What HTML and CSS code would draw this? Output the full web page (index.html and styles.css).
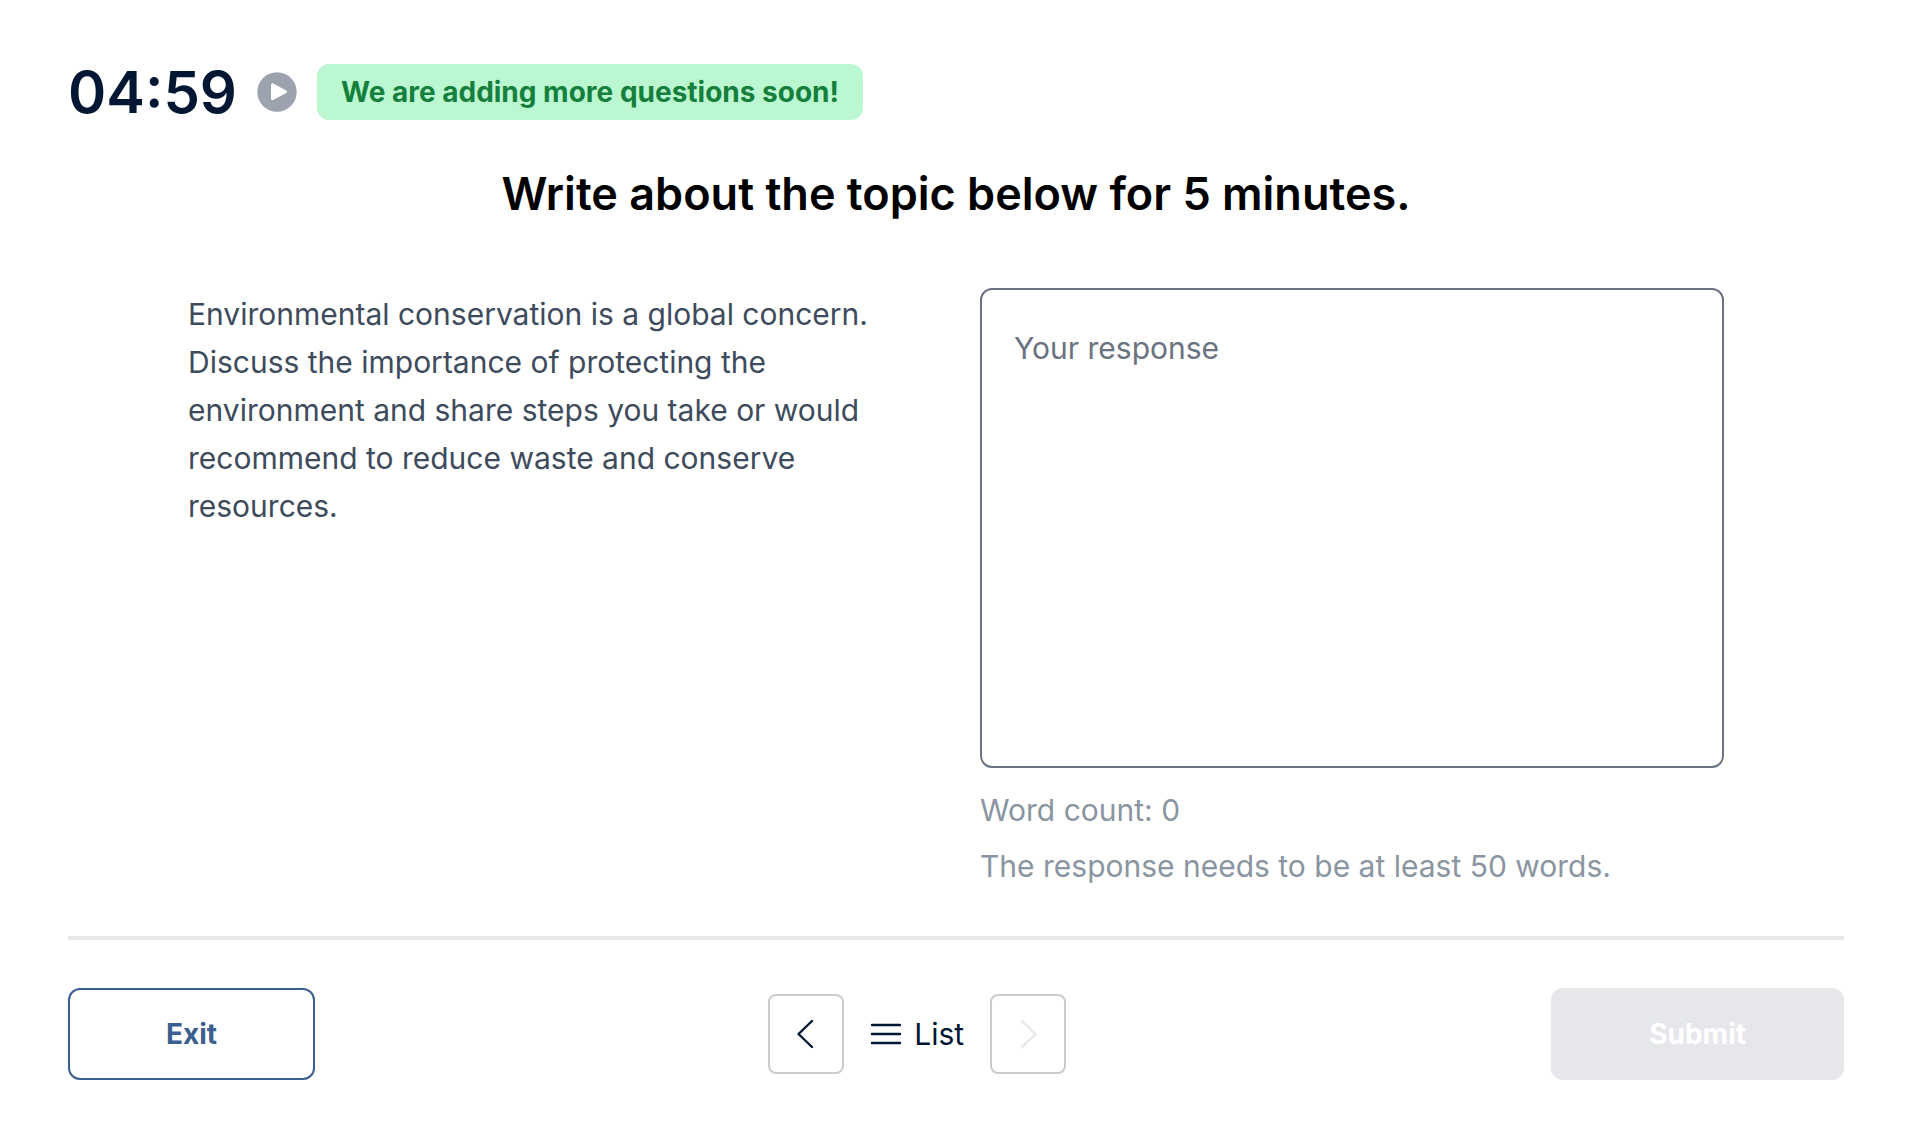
FILE: index.html
```html
<!DOCTYPE html>
<html lang="en">
<head>
    <meta charset="UTF-8">
    <meta name="viewport" content="width=device-width, initial-scale=1.0">
    <title>Writing practice</title>
    <link rel="stylesheet" href="styles.css">
</head>
<body>
    <header class="top-bar">
        <span class="timer" id="timer">04:59</span>
        <button class="play-btn" type="button" aria-label="Start timer">
            <svg viewBox="0 0 40 40">
                <circle cx="20" cy="20" r="19.7" fill="#9ca3af"/>
                <path d="M15.500 12.800 L28.500 19.700 L15.500 26.600 Z" fill="#fff" stroke="#fff" stroke-width="3" stroke-linejoin="round"/>
            </svg>
        </button>
        <div class="notice">We are adding more questions soon!</div>
    </header>

    <main>
        <h1>Write about the topic below for 5 minutes.</h1>

        <div class="task">
            <p class="prompt">Environmental conservation is a global concern. Discuss the importance of protecting the environment and share steps you take or would recommend to reduce waste and conserve resources.</p>

            <div class="answer">
                <textarea id="response" aria-label="Your response" placeholder="Your response"></textarea>
                <p class="hint">Word count: <span id="count">0</span></p>
                <p class="hint">The response needs to be at least 50 words.</p>
            </div>
        </div>
    </main>

    <footer class="bottom-bar">
        <button class="btn exit-btn" type="button">Exit</button>

        <nav class="pager">
            <button class="arrow-btn" type="button" aria-label="Previous">
                <svg viewBox="0 0 32 32"><path d="M22 3 L8.500 16 L22 29"/></svg>
            </button>
            <button class="list-btn" type="button">
                <svg viewBox="0 0 32 32"><path d="M2 7 H30 M2 16 H30 M2 25 H30"/></svg>
                List
            </button>
            <button class="arrow-btn" type="button" aria-label="Next" disabled>
                <svg viewBox="0 0 32 32"><path d="M10 3 L23.500 16 L10 29"/></svg>
            </button>
        </nav>

        <button class="btn submit-btn" id="submit" type="submit" disabled>Submit</button>
    </footer>

    <script>
        const response = document.getElementById('response');

        response.addEventListener('input', () => {
            const words = response.value.trim().split(/\s+/).filter(Boolean).length;
            document.getElementById('count').textContent = words;
            document.getElementById('submit').disabled = words < 50;
        });
    </script>
</body>
</html>
```
FILE: styles.css
```css
* {
    box-sizing: border-box;
}

body {
    margin: 0;
    padding: 56px 68px;
    background: #fff;
    color: #001633;
    font-family: Inter, sans-serif;
    font-size: 30px;
    line-height: 48px;
}

button {
    font: inherit;
    color: inherit;
    background: none;
    border: none;
    padding: 0;
    cursor: pointer;
}

button:disabled {
    cursor: not-allowed;
}

svg {
    display: block;
}

.top-bar {
    display: flex;
    align-items: center;
    gap: 20px;
}

.timer {
    font-size: 58px;
    font-weight: 600;
    line-height: 72px;
}

.play-btn svg {
    width: 40px;
    height: 40px;
}

.notice {
    padding: 8px 24px;
    border-radius: 12px;
    background: #bbf7d0;
    color: #15803d;
    font-size: 28px;
    font-weight: 700;
    line-height: 40px;
}

h1 {
    margin: 34px 0 62px;
    color: #000;
    font-size: 45px;
    font-weight: 600;
    line-height: 64px;
    text-align: center;
}

.task {
    display: grid;
    grid-template-columns: 1fr 1fr;
    gap: 48px;
    max-width: 1536px;
    margin: 0 auto;
}

.prompt {
    margin: 0;
    padding: 2px 48px 0 0;
    color: #3d4b5c;
}

.answer {
    display: flex;
    flex-direction: column;
    gap: 8px;
}

textarea {
    width: 100%;
    height: 480px;
    margin-bottom: 10px;
    padding: 34px 32px;
    border: 2px solid #6b7280;
    border-radius: 12px;
    color: inherit;
    font: inherit;
    resize: none;
}

textarea::placeholder {
    color: #6b7280;
}

.hint {
    margin: 0;
    color: #8a95a1;
}

.bottom-bar {
    display: flex;
    align-items: center;
    justify-content: space-between;
    margin-top: 46px;
    padding-top: 48px;
    border-top: 4px solid #e5e7eb;
}

.btn {
    padding: 24px 96px;
    border: 2px solid transparent;
    border-radius: 12px;
    font-size: 28px;
    font-weight: 700;
    line-height: 40px;
}

.exit-btn {
    border-color: #3b5f8f;
    color: #3b5f8f;
}

.submit-btn {
    background: #007bff;
    color: #fff;
}

.submit-btn:disabled {
    background: #e5e7eb;
    border-color: #e5e7eb;
}

.pager {
    display: flex;
    align-items: center;
    gap: 26px;
    padding-right: 32px;
}

.pager svg {
    width: 32px;
    height: 32px;
    fill: none;
    stroke: currentColor;
    stroke-width: 2.4;
    stroke-linecap: round;
    stroke-linejoin: round;
}

.arrow-btn {
    display: flex;
    align-items: center;
    justify-content: center;
    width: 76px;
    height: 80px;
    border: 2px solid #ccc;
    border-radius: 8px;
}

.arrow-btn:disabled {
    color: #e5e7eb;
}

.list-btn {
    display: flex;
    align-items: center;
    gap: 12px;
}
```
